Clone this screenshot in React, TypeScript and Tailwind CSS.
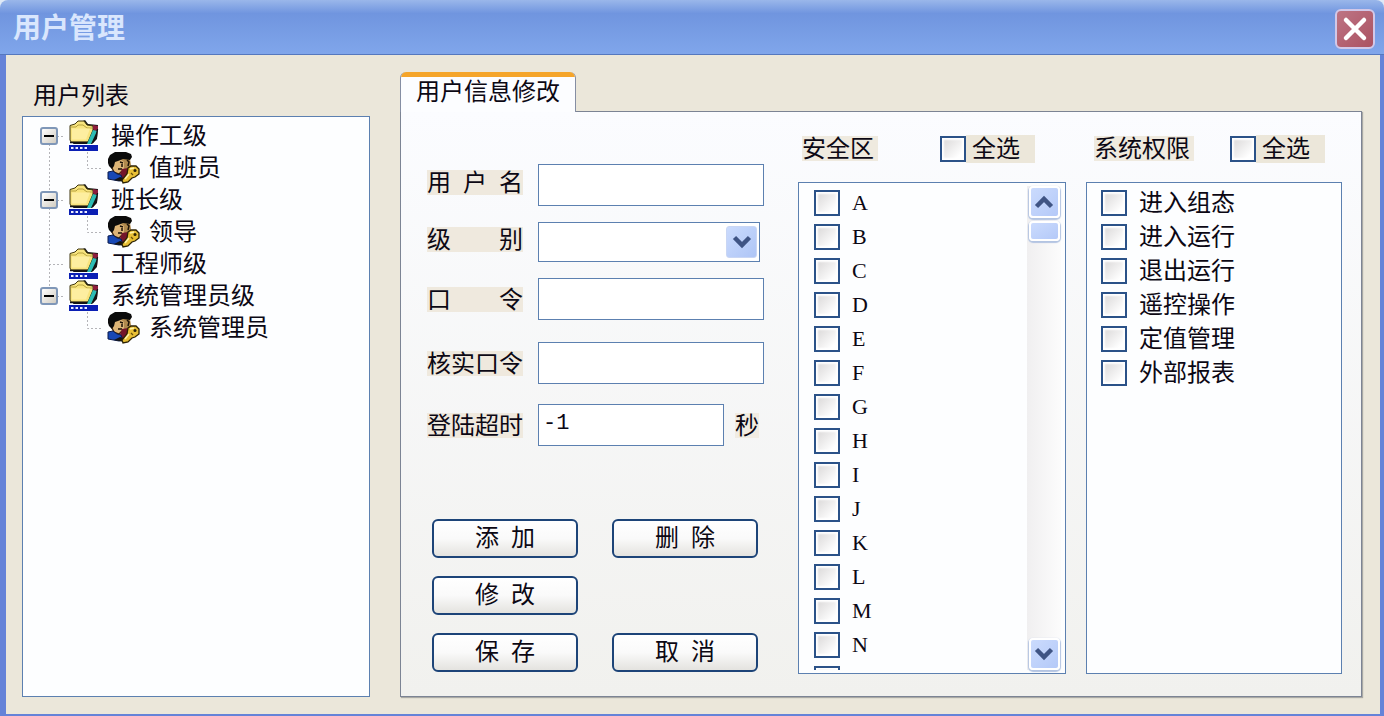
import { useState } from 'react';
import clsx from 'clsx';

type TreeNode = { name: string; users: string[] };

const levels: TreeNode[] = [
  { name: '操作工级', users: ['值班员'] },
  { name: '班长级', users: ['领导'] },
  { name: '工程师级', users: [] },
  { name: '系统管理员级', users: ['系统管理员'] },
];

const zones = ['A', 'B', 'C', 'D', 'E', 'F', 'G', 'H', 'I', 'J', 'K', 'L', 'M', 'N', 'O'];
const rights = ['进入组态', '进入运行', '退出运行', '遥控操作', '定值管理', '外部报表'];

function FolderIcon() {
  return (
    <svg width="30" height="32" viewBox="0 0 30 32" aria-hidden="true">
      <path d="M14 1l2-1 3 4 10 1-1 14-5 5H4z" fill="#141414" />
      <path d="M1 5.500l5-1.500 3-3h6l3 4 6 1v4l-5 12H2L1 20z" fill="#f8e47e" stroke="#3d340c" strokeWidth="1" />
      <path d="M2 7h5l2-2h5l4 3h5" fill="none" stroke="#b7a23e" strokeWidth="1" />
      <path d="M3 8.500h18l-4 11H3z" fill="#fdeea0" />
      <path d="M1 22.500h19" stroke="#141414" strokeWidth="1.500" />
      <path d="M24 5l5 1v4l-3 1-2-2z" fill="#8c1d3c" />
      <path d="M24 10l4 1-6 13h-4z" fill="#2bbcb4" />
      <path d="M28.500 9l-1 8-4 6" fill="none" stroke="#141414" strokeWidth="1.300" />
      <rect x="0" y="25" width="29" height="6" fill="#0b1fb4" />
      <path d="M2 28h16" stroke="#eef1ff" strokeWidth="1.800" strokeDasharray="2.500 2" />
    </svg>
  );
}

function UserIcon() {
  return (
    <svg width="34" height="32" viewBox="0 0 34 32" aria-hidden="true">
      <path d="M14 7h9l1 6-1 5-6 2-3-3z" fill="#b08a4e" />
      <path d="M4 9l9-2 4 3v7l-4 5-6-1-3-5z" fill="#deb577" />
      <path d="M1 7l2-4 5-3h11l5 2 1 3-2 3-7-1-5 2-3 1-1 4-2 3-3-3-1-3z" fill="#0b0b0b" />
      <path d="M13 10l3 1M15 12v3M20 8l2 2-1 4M11 17h4" stroke="#1b1208" strokeWidth="1.500" fill="none" />
      <path d="M5 16l2 4 5 2 3-3" stroke="#3a230c" strokeWidth="1.200" fill="none" />
      <path d="M13 22l2-5 6-1 2 3-4 6-4 2z" fill="#74162a" />
      <path d="M1 20l5-1 4 3 4 1 2 5-4 1-11-2z" fill="#1747b4" stroke="#0a1a4c" strokeWidth="1" />
      <path d="M7 28l10 2 2-3-6-2z" fill="#141414" />
      <path d="M21 16l3-2h5l3 3v5l-4 3-3 1-4 4-5 1-1-3 5-6z" fill="#e8bf34" stroke="#2c2204" strokeWidth="1.300" />
      <path d="M23 17l4-1M22 22l-4 5" stroke="#fff3a8" strokeWidth="1.600" />
      <circle cx="28" cy="18.500" r="1.500" fill="#2c2204" />
      <path d="M24 21l2 2" stroke="#6b5208" strokeWidth="1.200" />
    </svg>
  );
}

function Chevron({ up = false }: { up?: boolean }) {
  return (
    <svg width="20" height="14" viewBox="0 0 20 14" fill="none" aria-hidden="true">
      <path d={up ? 'M2.500 11.500l7.500-7.500 7.500 7.500' : 'M2.500 2.500l7.500 7.500 7.500-7.500'} stroke="#3f5484" strokeWidth="4.500" />
    </svg>
  );
}

function LevelRow({ node, first, last, open, onToggle }: {
  node: TreeNode; first: boolean; last: boolean; open: boolean; onToggle: () => void;
}) {
  return (
    <li>
      <div className="flex h-8 items-center">
        <div className="grid w-8 place-items-center">
          <svg className="col-start-1 row-start-1" width="32" height="32" aria-hidden="true">
            <g stroke="#b4b4b8" strokeWidth="1" strokeDasharray="2 2">
              <path d={first ? 'M16.500 16V32' : last ? 'M16.500 0V16' : 'M16.500 0V32'} />
              <path d="M16 16.500H32" />
            </g>
          </svg>
          {node.users.length > 0 && (
            <button
              type="button"
              aria-label={node.name}
              aria-expanded={open}
              onClick={onToggle}
              className="col-start-1 row-start-1 flex size-[18px] items-center justify-center rounded-[3px] border-2 border-[#7f97b8] bg-linear-to-br from-white to-[#d2cdc2]"
            >
              <span className="h-0.5 w-2.5 bg-black" />
            </button>
          )}
        </div>
        <span className="flex w-[38px] justify-center"><FolderIcon /></span>
        <span className="ml-2">{node.name}</span>
      </div>
      {open && node.users.map((user) => (
        <div key={user} className="flex h-8 items-center">
          <svg width="70" height="32" aria-hidden="true">
            <g fill="none" stroke="#b4b4b8" strokeWidth="1" strokeDasharray="2 2">
              {!last && <path d="M16.500 0V32" />}
              <path d="M54.500 0V16.500H70" />
            </g>
          </svg>
          <span className="flex w-[38px] justify-end"><UserIcon /></span>
          <span className="ml-2">{user}</span>
        </div>
      ))}
    </li>
  );
}

const boxClass =
  'size-[26px] shrink-0 appearance-none border-2 border-[#2b5288] bg-linear-to-br from-[#d8d6d6] to-white to-80% shadow-[inset_0_0_2px_2px_#fff] checked:from-[#4a9a4a]';

function CheckHeader({ title, id }: { title: string; id: string }) {
  return (
    <div className="flex h-[27px] items-center justify-between">
      <h2 className="bg-[#efeadf] pr-1 leading-[25px]">{title}</h2>
      <div className="flex items-center">
        <input id={id} type="checkbox" className={boxClass} />
        <label htmlFor={id} className="w-[69px] bg-[#ece7da] pl-1.5 leading-[28px]">全选</label>
      </div>
    </div>
  );
}

function CheckItem({ text, latin = false }: { text: string; latin?: boolean }) {
  return (
    <li>
      <label className="flex h-[34px] items-center">
        <input type="checkbox" className={boxClass} />
        <span className={clsx('ml-3', latin && 'font-["Liberation_Serif",serif] text-[22px]')}>{text}</span>
      </label>
    </li>
  );
}

const fieldClass = 'h-[42px] border border-[#5c80b0] bg-white px-1 outline-none';
const labelClass = 'w-24 shrink-0 bg-[#efe9de] leading-[25px] [text-align-last:justify]';

function FormButton({ text }: { text: string }) {
  return (
    <button
      type="button"
      className="flex h-[39px] justify-center rounded-md border-2 border-[#1d4478] bg-linear-to-b from-white via-[#fafafa] to-[#e4e3df] leading-[34px]"
    >
      <span className="w-[60px] [text-align-last:justify]">{text}</span>
    </button>
  );
}

const scrollPiece =
  'flex w-[31px] items-center justify-center rounded-[4px] border-2 border-white bg-linear-to-br from-[#cbdbfd] to-[#b4c9f8] shadow-[0_1px_1px_1px_#b3c4e2]';

export default function App() {
  const [closed, setClosed] = useState<string[]>([]);

  const toggle = (name: string) =>
    setClosed((list) => (list.includes(name) ? list.filter((n) => n !== name) : [...list, name]));

  return (
    <div className='flex h-screen flex-col bg-[#dfe9f6] font-["Liberation_Sans","Noto_Sans_CJK_SC",sans-serif] text-2xl text-[#0c0814]'>
      {/* Title bar */}
      <header className="flex h-[55px] shrink-0 items-center justify-between rounded-t-lg border-b border-[#5578be] bg-linear-to-b from-[#9ab7ea] via-[#7095df] via-25% to-[#80a6eb] pt-1 pr-[9px] pl-[13px]">
        <h1 className="text-[28px] font-bold text-[#d9e6fd]">用户管理</h1>
        <button
          type="button"
          aria-label="关闭"
          className="flex size-10 items-center justify-center rounded-md border-2 border-[#d2c8e8] bg-linear-to-br from-[#bd7484] to-[#ab5262]"
        >
          <svg width="26" height="26" viewBox="0 0 26 26" aria-hidden="true">
            <path d="M4 4l18 18M22 4L4 22" stroke="#fff" strokeWidth="4.500" strokeLinecap="round" />
          </svg>
        </button>
      </header>

      <main className="grid min-h-0 flex-1 grid-cols-[348fr_962fr] gap-[30px] border-r-4 border-b-2 border-l-[6px] border-[#6583d8] bg-[#ebe7da] pt-[17px] pr-[18px] pb-[17px] pl-4">
        <section className="flex min-h-0 flex-col">
          <h2 className="h-11 pl-[11px] leading-[48px]">用户列表</h2>
          <ul className="min-h-0 flex-1 overflow-hidden border border-[#5c80b0] bg-[#fdfeff] pt-[3px] pl-2.5">
            {levels.map((node, i) => (
              <LevelRow
                key={node.name}
                node={node}
                first={i === 0}
                last={i === levels.length - 1}
                open={!closed.includes(node.name)}
                onToggle={() => toggle(node.name)}
              />
            ))}
          </ul>
        </section>

        <section className="flex min-h-0 flex-col">
          <button
            type="button"
            className="relative z-10 -mb-px h-10 w-44 shrink-0 overflow-hidden rounded-t-md border-x border-[#858ea3] bg-[#fcfdff]"
          >
            <span className="block h-full border-t-[5px] border-[#f5a52a] leading-[30px]">用户信息修改</span>
          </button>

          <div className="flex min-h-0 flex-1 border border-[#7c8494] bg-linear-to-b from-[#fbfcff] to-[#f1f1ee] pt-[23px] pr-[19px] pb-[22px] pl-[26px] shadow-[1px_1px_1px_#a9a9a4]">
            {/* Account form */}
            <form className="w-[338px] shrink-0 pt-[29px]">
              <div className="flex items-center gap-[15px]">
                <label htmlFor="user" className={clsx(labelClass, 'mb-1.5')}>用 户 名</label>
                <input id="user" type="text" className={clsx(fieldClass, 'w-[226px]')} />
              </div>
              <div className="mt-4 flex items-center gap-[15px]">
                <label htmlFor="level" className={clsx(labelClass, 'mb-1.5')}>级 别</label>
                <div className="relative">
                  <select id="level" defaultValue="" className="h-10 w-[222px] appearance-none border border-[#5c80b0] bg-white px-1 outline-none">
                    <option value="" />
                    {levels.map((l) => <option key={l.name}>{l.name}</option>)}
                  </select>
                  <span className="pointer-events-none absolute inset-y-1 right-[3px] flex w-[31px] items-center justify-center rounded-[3px] border border-[#c9d6f4] bg-linear-to-br from-[#cbdbfd] to-[#aec5f6]">
                    <Chevron />
                  </span>
                </div>
              </div>
              <div className="mt-4 flex items-center gap-[15px]">
                <label htmlFor="pwd" className={labelClass}>口 令</label>
                <input id="pwd" type="password" className={clsx(fieldClass, 'w-[226px]')} />
              </div>
              <div className="mt-[22px] flex items-center gap-[15px]">
                <label htmlFor="pwd2" className={labelClass}>核实口令</label>
                <input id="pwd2" type="password" className={clsx(fieldClass, 'w-[226px]')} />
              </div>
              <div className="mt-5 flex items-center gap-[15px]">
                <label htmlFor="timeout" className={labelClass}>登陆超时</label>
                <input
                  id="timeout"
                  type="text"
                  defaultValue="-1"
                  className={clsx(fieldClass, 'w-[186px] pb-1 font-["Liberation_Mono",monospace] text-[22px]')}
                />
                <span className="-ml-1 bg-[#f1ece2] leading-[25px]">秒</span>
              </div>

              <div className="mt-[73px] ml-[5px] grid w-[326px] grid-cols-2 gap-x-[34px] gap-y-[18px]">
                <FormButton text="添 加" />
                <FormButton text="删 除" />
                <div className="col-span-2 grid grid-cols-2 gap-x-[34px]">
                  <FormButton text="修 改" />
                </div>
                <FormButton text="保 存" />
                <FormButton text="取 消" />
              </div>
            </form>

            <div className="ml-[33px] grid min-h-0 flex-1 grid-cols-[268fr_256fr] gap-5">
              {/* Security zones */}
              <div className="flex min-h-0 flex-col">
                <div className="pr-[31px] pl-1"><CheckHeader title="安全区" id="all-zones" /></div>
                <div className="mt-5 flex min-h-0 flex-1 border border-[#5c80b0] bg-[#fdfeff] py-[3px]">
                  <ul className="flex-1 overflow-hidden pl-[15px]">
                    {zones.map((z) => <CheckItem key={z} text={z} latin />)}
                  </ul>
                  <div className="mr-1 flex w-[34px] flex-col items-center gap-[3px] bg-linear-to-r from-[#f0eff0] to-[#fcfcfc]">
                    <button type="button" aria-label="向上" className={clsx(scrollPiece, 'h-8')}><Chevron up /></button>
                    <div className={clsx(scrollPiece, 'h-5')} />
                    <button type="button" aria-label="向下" className={clsx(scrollPiece, 'mt-auto h-8')}><Chevron /></button>
                  </div>
                </div>
              </div>

              {/* System rights */}
              <div className="flex min-h-0 flex-col">
                <div className="pr-[17px] pl-2"><CheckHeader title="系统权限" id="all-rights" /></div>
                <ul className="mt-5 min-h-0 flex-1 overflow-hidden border border-[#5c80b0] bg-[#fdfeff] pt-[3px] pl-3.5">
                  {rights.map((r) => <CheckItem key={r} text={r} />)}
                </ul>
              </div>
            </div>
          </div>
        </section>
      </main>
    </div>
  );
}
